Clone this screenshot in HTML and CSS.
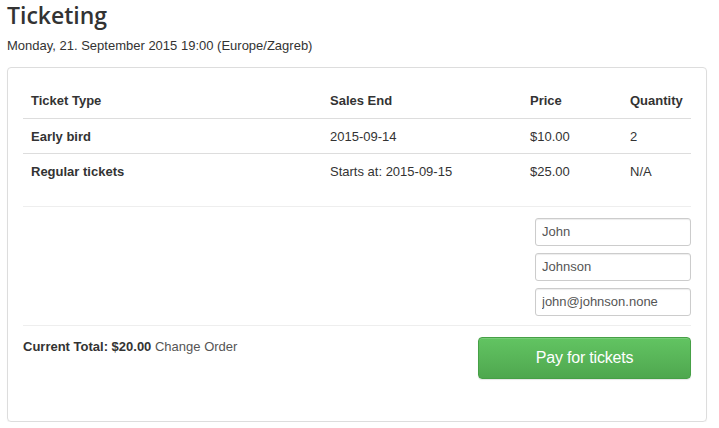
FILE: index.html
```html
<!DOCTYPE html>
<html>
<head>
<meta charset="utf-8">
<link rel="stylesheet" href="styles.css">
</head>
<body>
<div class="page">
  <h1 class="title">Ticketing</h1>
  <div class="date">Monday, 21. September 2015 19:00 (Europe/Zagreb)</div>
  <div class="panel">
    <table class="tickets">
      <thead>
        <tr>
          <th class="c-type">Ticket Type</th>
          <th class="c-end">Sales End</th>
          <th class="c-price">Price</th>
          <th class="c-qty">Quantity</th>
        </tr>
      </thead>
      <tbody>
        <tr>
          <td class="name">Early bird</td>
          <td>2015-09-14</td>
          <td>$10.00</td>
          <td>2</td>
        </tr>
        <tr>
          <td class="name">Regular tickets</td>
          <td>Starts at: 2015-09-15</td>
          <td>$25.00</td>
          <td>N/A</td>
        </tr>
      </tbody>
    </table>
    <hr class="sep sep-top">
    <div class="fields">
      <input class="field" type="text" value="John">
      <input class="field" type="text" value="Johnson">
      <input class="field" type="text" value="john@johnson.none">
    </div>
    <hr class="sep sep-bottom">
    <div class="footer">
      <div class="total"><strong>Current Total: $20.00</strong> <a class="change">Change Order</a></div>
      <button class="pay">Pay for tickets</button>
    </div>
  </div>
</div>
</body>
</html>
```
FILE: styles.css
```css
* { box-sizing: border-box; }
html, body { margin: 0; padding: 0; background: #fff; }
body {
  font-family: "Liberation Sans", Arial, sans-serif;
  font-size: 13px;
  color: #333;
}
.page { padding: 0 12px 0 7px; }
.title {
  font-family: "Open Sans", sans-serif;
  font-weight: 600;
  font-size: 23px;
  line-height: 30px;
  margin: 0;
  color: #333;
}
.date {
  margin-top: 7px;
  line-height: 18px;
  font-size: 13px;
}
.panel {
  margin-top: 12px;
  border: 1px solid #ddd;
  border-radius: 4px;
  padding: 15px 15px 42px 15px;
  box-shadow: 0 1px 1px rgba(0,0,0,0.05);
}
.tickets {
  width: 100%;
  border-collapse: collapse;
}
.tickets th, .tickets td {
  text-align: left;
  padding: 9px 8px 7px;
  line-height: 18.5px;
  vertical-align: top;
}
.tickets th { font-weight: bold; border-bottom: 1px solid #ddd; }
.tickets tbody tr + tr td { border-top: 1px solid #ddd; }
.tickets .name { font-weight: bold; }
.c-type { width: 299px; }
.c-end { width: 200px; }
.c-price { width: 100px; }
.sep {
  border: 0;
  border-top: 1px solid #eee;
  margin: 0;
}
.sep-top { margin-top: 17px; }
.fields {
  display: flex;
  flex-direction: column;
  align-items: flex-end;
  gap: 7px;
  padding: 11px 0 9px;
}
.field {
  width: 156px;
  height: 28px;
  border: 1px solid #ccc;
  border-radius: 3px;
  padding: 0 6px;
  font-family: "Liberation Sans", Arial, sans-serif;
  font-size: 13px;
  color: #555;
  box-shadow: inset 0 1px 1px rgba(0,0,0,0.075);
  background: #fff;
}
.footer {
  display: flex;
  justify-content: space-between;
  align-items: flex-start;
  padding-top: 11px;
}
.total { padding-top: 1px; line-height: 18px; }
.change { color: #555; }
.pay {
  width: 213px;
  height: 42px;
  border: 1px solid #46a046;
  border-radius: 4px;
  background: linear-gradient(to bottom, #62c462, #4fa74f);
  color: #fff;
  font-family: "Liberation Sans", Arial, sans-serif;
  font-size: 16px;
  letter-spacing: -0.2px;
  box-shadow: inset 0 1px 0 rgba(255,255,255,0.15), 0 1px 1px rgba(0,0,0,0.1);
  padding: 0;
}
```
